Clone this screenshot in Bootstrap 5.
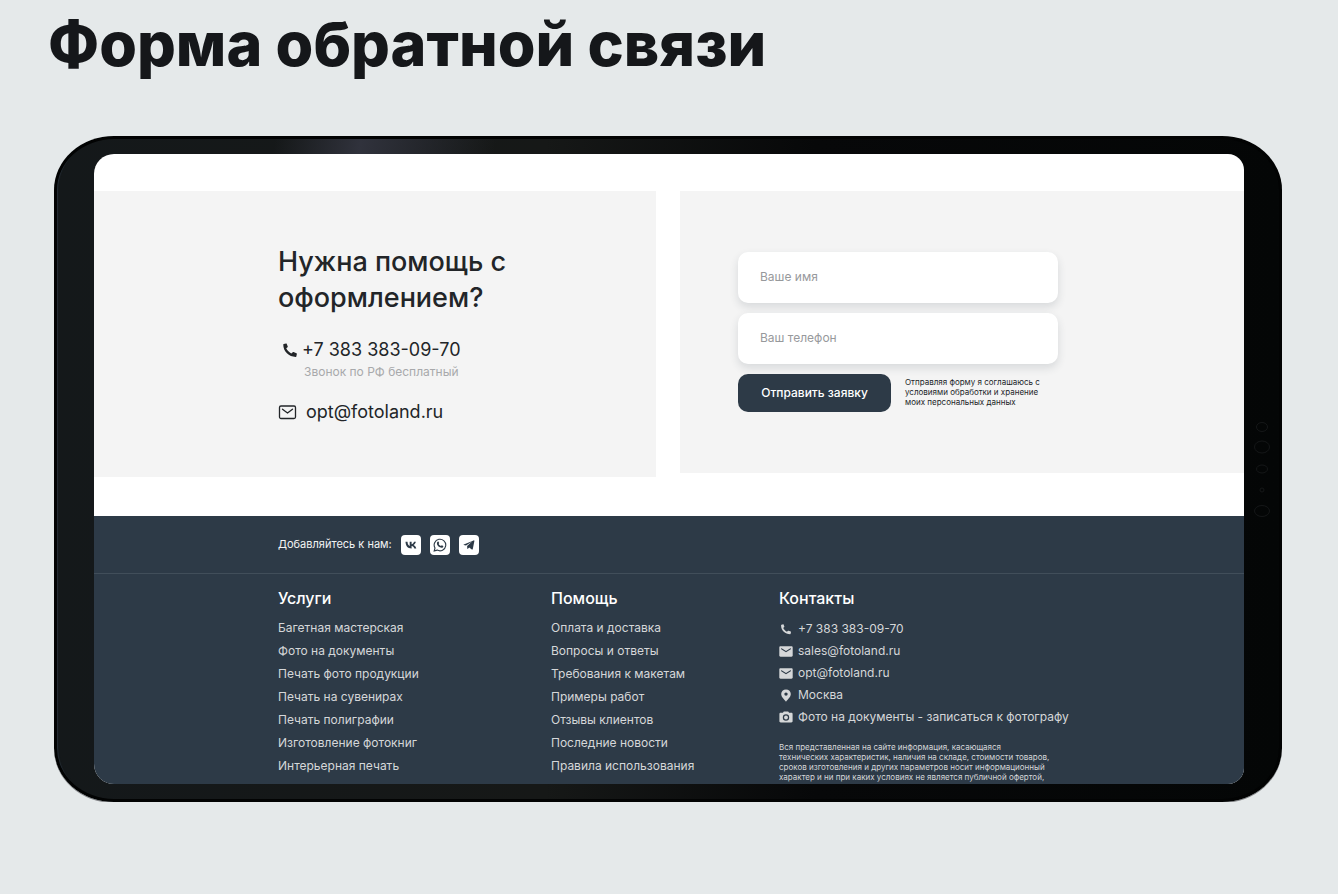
<!DOCTYPE html>
<html lang="ru">
<head>
<meta charset="utf-8">
<meta name="viewport" content="width=device-width, initial-scale=1">
<title>Форма обратной связи</title>
<link href="https://cdn.jsdelivr.net/npm/bootstrap@5.3.0/dist/css/bootstrap.min.css" rel="stylesheet">
<style>
  :root { --navy: #2d3a47; --ink: #222528; --panel: #f4f4f4; }
  body { background: #e5e9ea; font-family: Inter, "Liberation Sans", sans-serif; color: var(--ink); }
  a { color: inherit; text-decoration: none; }
  .page-title { font-size: 61px; line-height: 76px; font-weight: 800; color: #15171a; padding: 6px 0 0 48px; margin-bottom: 54px; }

  /* tablet body */
  .tablet { margin: 0 56px 0 54px; padding: 18px 38px 18px 40px; border-radius: 60px / 54px;
    background:
      linear-gradient(100deg, transparent 18%, #30323c 25%, transparent 36%) top / 100% 20px no-repeat,
      linear-gradient(90deg, #14181a 0%, #161817 40%, #070809 62%, #040606 100%);
    box-shadow: inset 0 0 0 3px #020303, inset 4px 0 1px #252d36, 0 1px 0 #85878a; position: relative; }
  .sensors { position: absolute; right: 12px; top: 284px; width: 16px; }
  .tablet-foot { position: absolute; right: 74px; bottom: -2px; width: 92px; height: 2px; }
  .screen { aspect-ratio: 1150 / 630; overflow: hidden; border-radius: 20px 16px 16px 20px; background: #fff; padding-top: 37px; }

  .help-panel, .form-panel { background: var(--panel); }
  .panels { display: grid; grid-template-columns: minmax(0, 562fr) minmax(0, 564fr); column-gap: 24px; align-items: start; margin-bottom: 39px; }
  .help-panel { padding: 53px 0; }
  .form-panel { padding: 61px 0 61px 58px; }
  .help-inner { width: 378px; }
  .help-title { font-size: 27px; line-height: 36px; font-weight: 500; margin-bottom: 22px; }
  .help-line { font-size: 18px; line-height: 24px; }
  .help-note { font-size: 12px; line-height: 16px; color: #a8a9ab; padding-left: 26px; margin: 2px 0 20px; }

  .request-form { max-width: 320px; }
  .request-form .form-control { height: 51px; border: 0; border-radius: 10px; padding: 0 22px 2px; font-size: 12px; margin-bottom: 10px; box-shadow: 0 4px 8px rgba(45,58,71,.14); }
  .request-form .form-control::placeholder { color: #97999c; opacity: 1; }
  .btn-send { background: var(--navy); color: #fff; width: 153px; height: 38px; border-radius: 10px; font-size: 12px; font-weight: 500; padding: 0; white-space: nowrap; }
  .btn-send:hover { background: #3a4a59; color: #fff; }
  .consent { font-size: 8px; line-height: 10px; margin: 3px 0 0 14px; white-space: nowrap; }

  .site-footer { background: var(--navy); color: #d5d7d9; min-height: 300px; }
  .footer-inner { max-width: 782px; margin: 0 auto; }
  .social-row { border-bottom: 1px solid #414e5a; }
  .social-row .footer-inner { height: 57px; color: #f2f3f4; font-size: 11px; gap: 9px; }
  .social-link { width: 20px; height: 20px; border-radius: 4px; background: #fff; color: var(--navy); }
  .footer-cols { display: grid; grid-template-columns: minmax(0, 273fr) minmax(0, 228fr) minmax(0, 281fr); padding-top: 13px; }
  .footer-cols h2 { font-size: 16px; line-height: 22px; font-weight: 500; color: #fff; margin-bottom: 7px; }
  .menu-list li { font-size: 12px; line-height: 23px; height: 23px; white-space: nowrap; }
  .contact-list { margin: 0 0 14px; padding-top: 2px; }
  .contact-list li { font-size: 12px; line-height: 22px; height: 22px; white-space: nowrap; gap: 5px; }
  .contact-list svg { flex-shrink: 0; }
  .legal { font-size: 8px; line-height: 10px; white-space: nowrap; }
</style>
</head>
<body>
<svg class="d-none" xmlns="http://www.w3.org/2000/svg">
  <symbol id="phone" viewBox="0 0 14 14"><path d="M1.2.9 3.3.4c.3-.1.5.1.6.3l1 2.500c.1.300 0 .5-.2.700L3.500 5c.8 1.800 2.400 3.600 4.700 4.900l1.400-1.300c.2-.2.5-.2.700-.1l2.700 1.100c.3.100.5.400.4.700l-.5 2.200c-.1.300-.3.500-.6.500C6.100 13 .7 8.200.7 1.500c0-.3.200-.5.500-.6z" fill="currentColor"/></symbol>
  <symbol id="mail" viewBox="0 0 14 11"><path fill-rule="evenodd" d="M1.500.300h11c.7 0 1.200.5 1.200 1.200v8c0 .7-.5 1.200-1.200 1.200h-11C.8 10.700.3 10.200.3 9.500v-8C.3.800.8.300 1.500.300zM2.200 2v1.200L7 6.200l4.800-3V2L7 5z" fill="currentColor"/></symbol>
</svg>

<h1 class="page-title">Форма обратной связи</h1>

<main class="tablet">
  <div class="screen">
    <div class="panels">
      <section class="help-panel d-flex justify-content-end">
        <div class="help-inner">
          <h2 class="help-title">Нужна помощь с<br>оформлением?</h2>
          <a class="help-line d-flex align-items-center" href="tel:+73833830970">
            <svg class="ms-1 me-1" width="16" height="15"><use href="#phone"/></svg>+7 383 383-09-70</a>
          <p class="help-note">Звонок по РФ бесплатный</p>
          <a class="help-line d-flex align-items-center" href="mailto:opt@fotoland.ru">
            <svg class="me-2" width="20" height="16" viewBox="0 0 20 16" fill="none" stroke="currentColor" stroke-width="1.300" stroke-linecap="round" stroke-linejoin="round"><rect x="1.500" y="2" width="16" height="12.500" rx="1.500"/><path d="M4.500 5.200 9.500 9l5-3.800"/></svg>opt@fotoland.ru</a>
        </div>
      </section>
      <section class="form-panel">
        <form class="request-form">
          <input class="form-control" type="text" aria-label="Ваше имя" placeholder="Ваше имя">
          <input class="form-control" type="tel" aria-label="Ваш телефон" placeholder="Ваш телефон">
          <div class="d-flex align-items-start">
            <button class="btn btn-send" type="button">Отправить заявку</button>
            <p class="consent">Отправляя форму я соглашаюсь с<br>условиями обработки и хранение<br>моих персональных данных</p>
          </div>
        </form>
      </section>
    </div>

    <footer class="site-footer">
      <div class="social-row">
        <div class="footer-inner d-flex align-items-center">
          <span>Добавляйтесь к нам:</span>
          <a class="social-link d-flex align-items-center justify-content-center" href="#" aria-label="ВКонтакте"><svg width="12" height="8" viewBox="0 0 12 8"><path fill="currentColor" d="M6.400 7.400C2.700 7.400.7 4.900.5.700h2c.1 2.900 1.300 4 2.200 4.200V.7h1.900v2.500C7.600 3.100 8.600 2 9 .7h1.900c-.3 1.500-1.500 2.700-2.300 3.200.8.400 2.100 1.400 2.700 3.500h-2c-.4-1.200-1.400-2.200-2.700-2.300v2.300z"/></svg></a>
          <a class="social-link d-flex align-items-center justify-content-center" href="#" aria-label="WhatsApp"><svg width="14" height="14" viewBox="0 0 14 14"><path fill="none" stroke="currentColor" stroke-width="1.100" d="M1.200 12.900 2 10a5.800 5.800 0 1 1 2.200 2.100z"/><path fill="currentColor" d="M4.700 3.700c.3-.3.800-.3.900 0l.6 1.300c0 .4-.4.700-.6.900.5 1 1.300 1.700 2.400 2.200.3-.3.600-.8.900-.8l1.300.7c.3.200.1.800-.2 1.200-.6.700-1.700.8-3.100.1C5.300 8.500 4.200 7.100 4 5.900c-.2-1 .2-1.800.7-2.200z"/></svg></a>
          <a class="social-link d-flex align-items-center justify-content-center" href="#" aria-label="Telegram"><svg width="12" height="12" viewBox="0 0 12 12"><path fill="currentColor" d="M.8 5.500 10.600 1.400c.5-.2.900.1.800.7L9.800 10c-.1.600-.5.700-1 .4L6.200 8.500 4.900 9.800c-.3.300-.6.200-.6-.3L4.100 7l5-4.400L3 6.600.8 6.100c-.4-.1-.4-.4 0-.6z"/></svg></a>
        </div>
      </div>
      <div class="footer-inner footer-cols">
        <nav aria-label="Услуги">
          <h2>Услуги</h2>
          <ul class="menu-list list-unstyled mb-0">
            <li><a href="#">Багетная мастерская</a></li>
            <li><a href="#">Фото на документы</a></li>
            <li><a href="#">Печать фото продукции</a></li>
            <li><a href="#">Печать на сувенирах</a></li>
            <li><a href="#">Печать полиграфии</a></li>
            <li><a href="#">Изготовление фотокниг</a></li>
            <li><a href="#">Интерьерная печать</a></li>
          </ul>
        </nav>
        <nav aria-label="Помощь">
          <h2>Помощь</h2>
          <ul class="menu-list list-unstyled mb-0">
            <li><a href="#">Оплата и доставка</a></li>
            <li><a href="#">Вопросы и ответы</a></li>
            <li><a href="#">Требования к макетам</a></li>
            <li><a href="#">Примеры работ</a></li>
            <li><a href="#">Отзывы клиентов</a></li>
            <li><a href="#">Последние новости</a></li>
            <li><a href="#">Правила использования</a></li>
          </ul>
        </nav>
        <section>
          <h2>Контакты</h2>
          <ul class="contact-list list-unstyled">
            <li class="d-flex align-items-center"><svg width="14" height="11"><use href="#phone"/></svg><a href="#">+7 383 383-09-70</a></li>
            <li class="d-flex align-items-center"><svg width="14" height="11"><use href="#mail"/></svg><a href="#">sales@fotoland.ru</a></li>
            <li class="d-flex align-items-center"><svg width="14" height="11"><use href="#mail"/></svg><a href="#">opt@fotoland.ru</a></li>
            <li class="d-flex align-items-center"><svg width="14" height="13" viewBox="0 0 14 13"><path fill="currentColor" fill-rule="evenodd" d="M7 .4c2.800 0 4.800 2 4.800 4.600 0 3-3.100 5.300-4.800 7.800C5.300 10.300 2.200 8 2.200 5 2.200 2.400 4.200.4 7 .4zM7 3.400a1.700 1.700 0 1 0 0 3.400 1.700 1.700 0 0 0 0-3.400z"/></svg><span>Москва</span></li>
            <li class="d-flex align-items-center"><svg width="14" height="12" viewBox="0 0 14 12"><path fill="currentColor" fill-rule="evenodd" d="M4.800.5h4.400l.9 1.300h2.200c.8 0 1.300.5 1.300 1.200v7.300c0 .7-.5 1.200-1.300 1.200H1.700C.9 11.500.4 11 .4 10.300V3c0-.7.5-1.200 1.300-1.200h2.200zM7 3.300a3.200 3.200 0 1 0 0 6.400 3.200 3.200 0 0 0 0-6.400z"/><circle cx="7" cy="6.500" r="1.900" fill="currentColor"/></svg><a href="#">Фото на документы - записаться к фотографу</a></li>
          </ul>
          <p class="legal">Вся представленная на сайте информация, касающаяся<br>технических характеристик, наличия на складе, стоимости товаров,<br>сроков изготовления и других параметров носит информационный<br>характер и ни при каких условиях не является публичной офертой,</p>
        </section>
      </div>
    </footer>
  </div>
  <svg class="sensors" height="100" viewBox="0 0 16 100" fill="none" stroke="#151718" aria-hidden="true"><ellipse cx="8" cy="7" rx="5.500" ry="4.500"/><ellipse cx="8" cy="27" rx="7.500" ry="6"/><ellipse cx="8" cy="49" rx="5.500" ry="4"/><circle cx="8" cy="70" r="2"/><ellipse cx="8" cy="91" rx="7.500" ry="5.500"/></svg>
  <svg class="tablet-foot" viewBox="0 0 92 2" aria-hidden="true"><path d="M0 0h44l-3 2H5zM48 0h44l-5 2H51z" fill="#35383c"/></svg>
</main>
<script src="https://cdn.jsdelivr.net/npm/bootstrap@5.3.0/dist/js/bootstrap.bundle.min.js"></script>
</body>
</html>
